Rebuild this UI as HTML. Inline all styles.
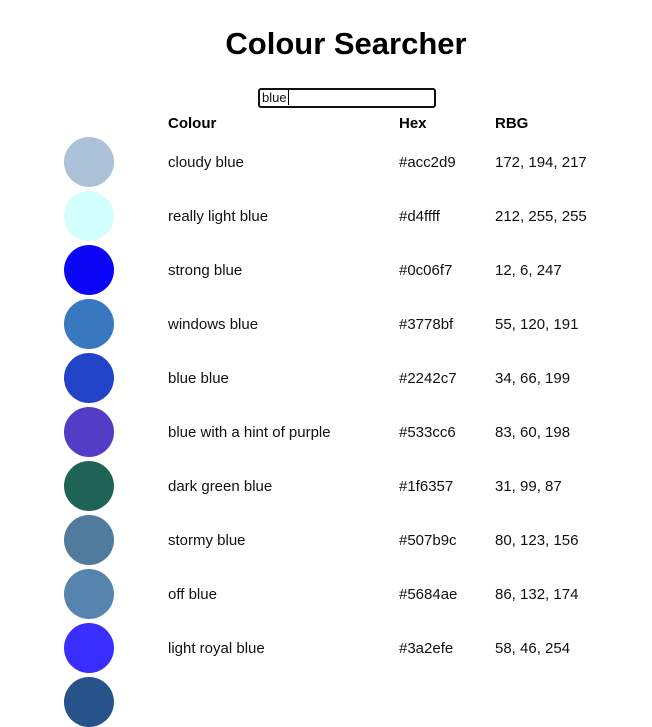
<!DOCTYPE html>
<html><head><meta charset="utf-8"><style>
body{margin:0;width:652px;height:688px;overflow:hidden;background:#fff;font-family:"Liberation Sans",sans-serif;color:#111;position:relative}
.a{position:absolute;white-space:nowrap}
h1{position:absolute;left:0;width:692px;text-align:center;top:26px;margin:0;font-size:31px;font-weight:bold;color:#000}
.in{position:absolute;left:258px;top:88px;width:172px;height:16px;border:2px solid #111;border-radius:3px;font-size:13px;line-height:16px;padding-left:2px}
.h{font-weight:bold;font-size:15px;top:115px;color:#000}
.c{position:absolute;left:64px;width:50px;height:50px;border-radius:50%}
.t{position:absolute;font-size:15px;white-space:nowrap}
</style></head><body>
<h1>Colour Searcher</h1>
<div class="in">blue<span style="border-left:1px solid #000;margin-left:1px"></span></div>
<div class="a h" style="left:168px">Colour</div>
<div class="a h" style="left:399px">Hex</div>
<div class="a h" style="left:495px">RBG</div>

<div class="c" style="top:137px;background:#acc2d9"></div><div class="t" style="top:154px;left:168px">cloudy blue</div><div class="t" style="top:154px;left:399px">#acc2d9</div><div class="t" style="top:154px;left:495px">172, 194, 217</div>
<div class="c" style="top:191px;background:#d4ffff"></div><div class="t" style="top:208px;left:168px">really light blue</div><div class="t" style="top:208px;left:399px">#d4ffff</div><div class="t" style="top:208px;left:495px">212, 255, 255</div>
<div class="c" style="top:245px;background:#0c06f7"></div><div class="t" style="top:262px;left:168px">strong blue</div><div class="t" style="top:262px;left:399px">#0c06f7</div><div class="t" style="top:262px;left:495px">12, 6, 247</div>
<div class="c" style="top:299px;background:#3778bf"></div><div class="t" style="top:316px;left:168px">windows blue</div><div class="t" style="top:316px;left:399px">#3778bf</div><div class="t" style="top:316px;left:495px">55, 120, 191</div>
<div class="c" style="top:353px;background:#2242c7"></div><div class="t" style="top:370px;left:168px">blue blue</div><div class="t" style="top:370px;left:399px">#2242c7</div><div class="t" style="top:370px;left:495px">34, 66, 199</div>
<div class="c" style="top:407px;background:#533cc6"></div><div class="t" style="top:424px;left:168px">blue with a hint of purple</div><div class="t" style="top:424px;left:399px">#533cc6</div><div class="t" style="top:424px;left:495px">83, 60, 198</div>
<div class="c" style="top:461px;background:#1f6357"></div><div class="t" style="top:478px;left:168px">dark green blue</div><div class="t" style="top:478px;left:399px">#1f6357</div><div class="t" style="top:478px;left:495px">31, 99, 87</div>
<div class="c" style="top:515px;background:#507b9c"></div><div class="t" style="top:532px;left:168px">stormy blue</div><div class="t" style="top:532px;left:399px">#507b9c</div><div class="t" style="top:532px;left:495px">80, 123, 156</div>
<div class="c" style="top:569px;background:#5684ae"></div><div class="t" style="top:586px;left:168px">off blue</div><div class="t" style="top:586px;left:399px">#5684ae</div><div class="t" style="top:586px;left:495px">86, 132, 174</div>
<div class="c" style="top:623px;background:#3a2efe"></div><div class="t" style="top:640px;left:168px">light royal blue</div><div class="t" style="top:640px;left:399px">#3a2efe</div><div class="t" style="top:640px;left:495px">58, 46, 254</div>
<div class="c" style="top:677px;background:#27528a"></div>
</body></html>
